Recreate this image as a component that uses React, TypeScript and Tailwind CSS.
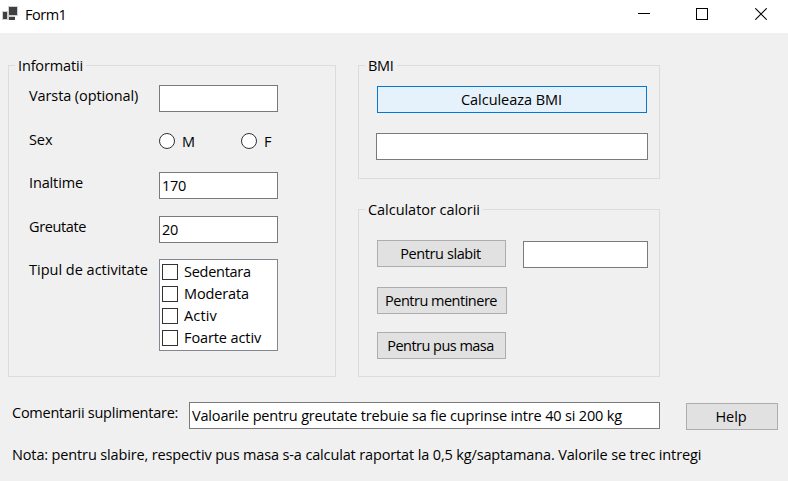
import type { ReactNode } from "react";

const field =
  "block h-[27px] border border-[#7a7a7a] bg-white pl-[2px] pb-px outline-none";
const button =
  "flex h-[27px] items-center justify-center border border-[#adadad] bg-[#e1e1e1] pr-[2px] whitespace-nowrap";

function GroupBox({
  title,
  titleClass,
  className,
  children,
}: {
  title: string;
  titleClass: string;
  className: string;
  children: ReactNode;
}) {
  return (
    <section className={`relative border border-[#dcdcdc] ${className}`}>
      <h2 className={`absolute -top-[10px] left-[6px] bg-[#f0f0f0] px-[3px] leading-5 whitespace-nowrap ${titleClass}`}>
        {title}
      </h2>
      {children}
    </section>
  );
}

function Row({
  label,
  labelClass,
  className,
  children,
}: {
  label: string;
  labelClass: string;
  className: string;
  children: ReactNode;
}) {
  return (
    <div className={`flex ${className}`}>
      <span className={`w-[130px] leading-5 whitespace-nowrap ${labelClass}`}>{label}</span>
      {children}
    </div>
  );
}

function Radio({ label, className }: { label: string; className: string }) {
  return (
    <label className={`flex items-start ${className}`}>
      <span className="mt-px size-4 rounded-full border border-[#333333] bg-white" />
      <span className="ml-[7px] leading-5">{label}</span>
    </label>
  );
}

const activities = [
  { name: "Sedentara", spacing: "tracking-[-0.27px]" },
  { name: "Moderata", spacing: "tracking-[-0.14px]" },
  { name: "Activ", spacing: "tracking-[0.15px]" },
  { name: "Foarte activ", spacing: "tracking-[-0.1px]" },
];

export default function App() {
  return (
    <div className="flex h-[481px] w-[788px] flex-col overflow-hidden bg-[#f0f0f0] font-['Open_Sans','Noto_Sans',sans-serif] text-[14.5px] text-black">
      <header className="flex h-[33px] shrink-0 bg-white">
        <svg className="mt-[5px] ml-[2px]" width="17" height="16" viewBox="0 0 17 16" shapeRendering="crispEdges">
          <path d="M6 1h10v10h-3v4H0V6h6z" fill="#d0d0d0" />
          <path d="M7 2h8v8H7zM1 7h4v7H1zM7 12h6v3H7z" fill="#404040" />
        </svg>
        <span className="mt-[5px] ml-[6px] leading-5 tracking-[-0.5px]">Form1</span>
        <div className="mt-2 mr-[21px] ml-auto flex">
          <svg width="12" height="12" shapeRendering="crispEdges">
            <path d="M0 5.5h12" stroke="#000" />
          </svg>
          <svg className="ml-[46px]" width="12" height="12" shapeRendering="crispEdges">
            <path d="M.5 .5h11v11h-11z" stroke="#000" fill="none" />
          </svg>
          <svg className="ml-[47px]" width="12" height="12">
            <path d="M.3 .3l11.4 11.4M11.7 .3L.3 11.7" stroke="#000" strokeWidth="1.1" />
          </svg>
        </div>
      </header>

      <main className="flex gap-[22px] pt-8 pl-2">
        <GroupBox
          title="Informatii"
          titleClass="tracking-[-0.15px]"
          className="h-[312px] w-[328px] pt-[19px] pl-5"
        >
          <Row label="Varsta (optional)" labelClass="pt-px tracking-[-0.1px]" className="h-[45px]">
            <input className={`${field} w-[119px]`} />
          </Row>
          <Row label="Sex" labelClass="tracking-[-0.1px]" className="h-[42px]">
            <div className="flex pt-[2px]">
              <Radio label="M" className="w-[82px]" />
              <Radio label="F" className="" />
            </div>
          </Row>
          <Row label="Inaltime" labelClass="pt-px tracking-[-0.14px]" className="h-[44px]">
            <input className={`${field} w-[119px] tracking-[-0.3px]`} defaultValue="170" />
          </Row>
          <Row label="Greutate" labelClass="pt-px tracking-[-0.37px]" className="h-[43px]">
            <input className={`${field} w-[119px] tracking-[-0.3px]`} defaultValue="20" />
          </Row>
          <Row label="Tipul de activitate" labelClass="pt-px" className="">
            <ul className="h-[92px] w-[119px] border border-[#828790] bg-white pt-[2px] pl-[2px]">
              {activities.map((a) => (
                <li key={a.name} className="flex h-[22px]">
                  <span className="mt-[2px] size-4 border border-[#333333]" />
                  <span className={`ml-[6px] leading-5 whitespace-nowrap ${a.spacing}`}>{a.name}</span>
                </li>
              ))}
            </ul>
          </Row>
        </GroupBox>

        <div className="flex flex-col gap-[30px]">
          <GroupBox title="BMI" titleClass="tracking-[-0.3px]" className="h-[114px] w-[302px] pt-5 pl-[17px]">
            <button className="ml-px flex h-[27px] w-[270px] items-center justify-center border border-[#0078d7] bg-[#e5f1fb] pr-px tracking-[-0.05px]">
              Calculeaza BMI
            </button>
            <input className={`${field} mt-5 w-[272px]`} />
          </GroupBox>
          <GroupBox
            title="Calculator calorii"
            titleClass="tracking-[-0.04px]"
            className="h-[168px] w-[302px] pt-[30px] pl-[18px]"
          >
            <div className="flex h-[47px] gap-[17px]">
              <button className={`${button} w-[129px] tracking-[-0.4px]`}>Pentru slabit</button>
              <input className={`${field} mt-px w-[125px]`} />
            </div>
            <button className={`${button} w-[130px] tracking-[-0.5px]`}>Pentru mentinere</button>
            <button className={`${button} mt-[18px] w-[129px] tracking-[-0.52px]`}>Pentru pus masa</button>
          </GroupBox>
        </div>
      </main>

      <footer className="pl-3">
        <div className="flex pt-[25px]">
          <span className="mt-px w-[177px] leading-5 tracking-[-0.25px] whitespace-nowrap">
            Comentarii suplimentare:
          </span>
          <input
            className={`${field} w-[471px] tracking-[-0.165px]`}
            defaultValue="Valoarile pentru greutate trebuie sa fie cuprinse intre 40 si 200 kg"
          />
          <button className={`${button} mt-px ml-[26px] w-[92px] tracking-[-0.1px]`}>Help</button>
        </div>
        <p className="mt-[15px] leading-5 tracking-[-0.14px] whitespace-nowrap">
          Nota: pentru slabire, respectiv pus masa s-a calculat raportat la 0,5 kg/saptamana. Valorile se trec intregi
        </p>
      </footer>
    </div>
  );
}
